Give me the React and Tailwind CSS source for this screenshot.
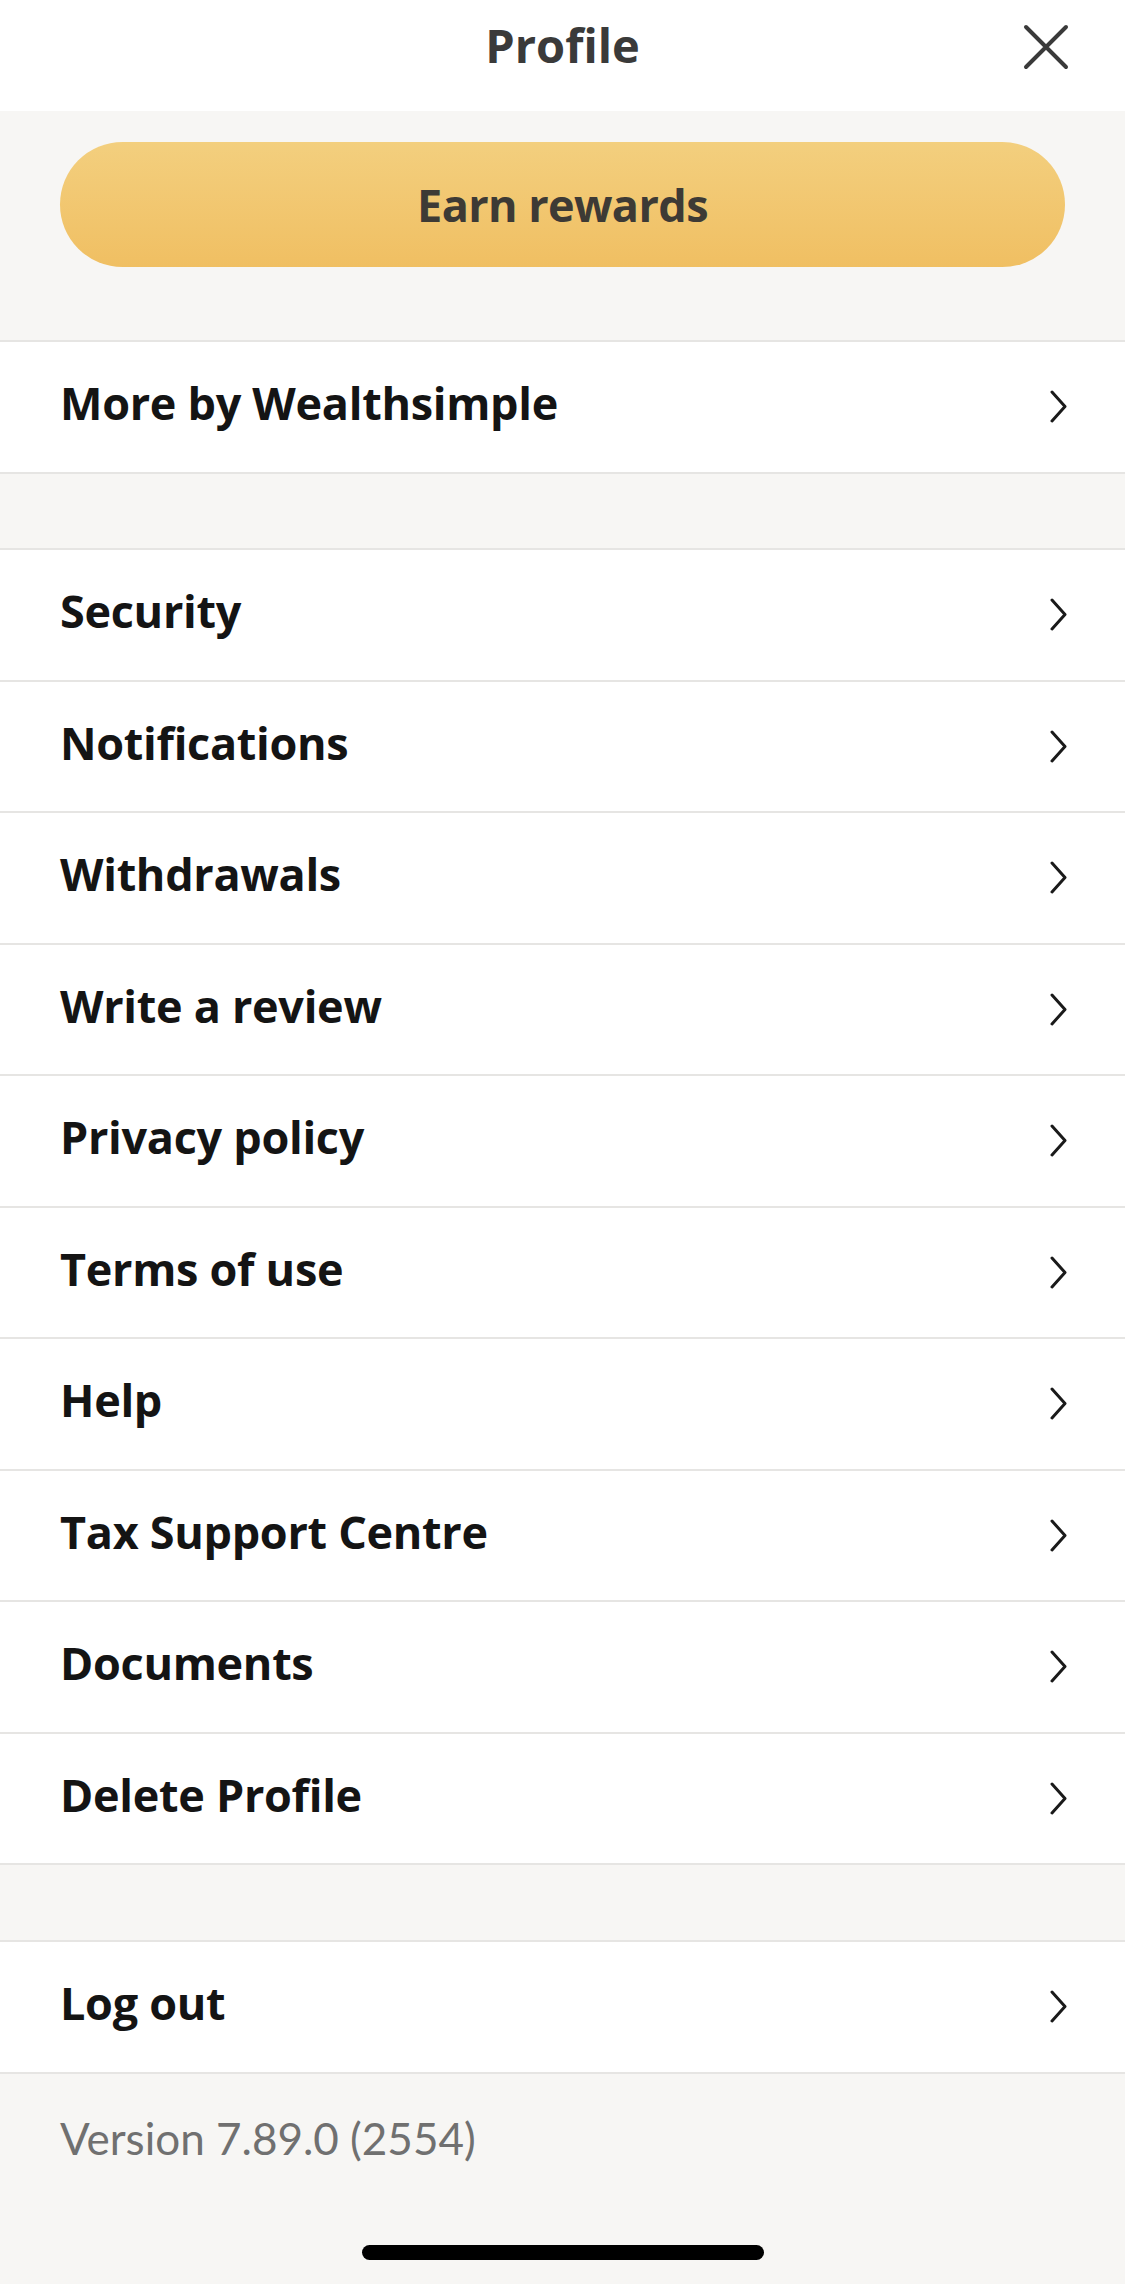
import React from "react";

const font = { fontFamily: "Lato, 'Noto Sans', sans-serif" };
const boldFont = { fontFamily: "'Open Sans', Lato, sans-serif" };

const firstGroup = ["More by Wealthsimple"];
const mainGroup = [
  "Security",
  "Notifications",
  "Withdrawals",
  "Write a review",
  "Privacy policy",
  "Terms of use",
  "Help",
  "Tax Support Centre",
  "Documents",
  "Delete Profile",
];
const lastGroup = ["Log out"];

function Chevron() {
  return (
    <svg width="17" height="33" viewBox="0 0 17 33" fill="none">
      <path d="M2 2 L15 16.5 L2 31" stroke="#1a1a1a" strokeWidth="3" strokeLinecap="round" strokeLinejoin="round" />
    </svg>
  );
}

function Row({ label }) {
  return (
    <div className="flex items-center justify-between h-[131.5px] pl-[60px] pr-[58px] bg-white border-b-2 border-[#e6e5e3]">
      <span className="text-[45px] font-bold text-[#141414] tracking-[-0.3px] -mt-[8px]" style={boldFont}>{label}</span>
      <Chevron />
    </div>
  );
}

function Group({ items }) {
  return (
    <div className="border-t-2 border-[#e6e5e3]">
      {items.map((label) => (
        <Row key={label} label={label} />
      ))}
    </div>
  );
}

export default function App() {
  return (
    <div className="w-[1125px] h-[2284px] bg-[#f7f6f4] flex flex-col overflow-hidden" style={font}>
      {/* Header */}
      <div className="h-[111px] bg-white grid grid-cols-[1fr_auto_1fr] items-center px-[56px]">
        <div />
        <h1 className="text-[47px] font-bold text-[#3a3a3a] -mt-[20px]" style={boldFont}>Profile</h1>
        <div className="flex justify-end -mt-[18px]">
          <svg width="46" height="46" viewBox="0 0 46 46" fill="none">
            <path d="M3 3 L43 43 M43 3 L3 43" stroke="#3a3a3a" strokeWidth="4" strokeLinecap="round" />
          </svg>
        </div>
      </div>

      {/* Rewards */}
      <div className="px-[60px] pt-[31px] pb-[73px]">
        <button className="w-full h-[125px] rounded-full bg-gradient-to-b from-[#f3cf7e] to-[#f0bf62] text-[45px] font-bold text-[#3d3a35] tracking-[-0.6px]" style={boldFont}>
          Earn rewards
        </button>
      </div>

      <Group items={firstGroup} />
      <div className="h-[74.5px]" />
      <Group items={mainGroup} />
      <div className="h-[75px]" />
      <Group items={lastGroup} />

      {/* Footer */}
      <div className="flex-1 flex flex-col">
        <p className="pl-[60px] pt-[31px] text-[44px] text-[#707070]">Version 7.89.0 (2554)</p>
        <div className="flex-1" />
        <div className="flex justify-center pb-[24px]">
          <div className="w-[402px] h-[15px] rounded-full bg-black" />
        </div>
      </div>
    </div>
  );
}
